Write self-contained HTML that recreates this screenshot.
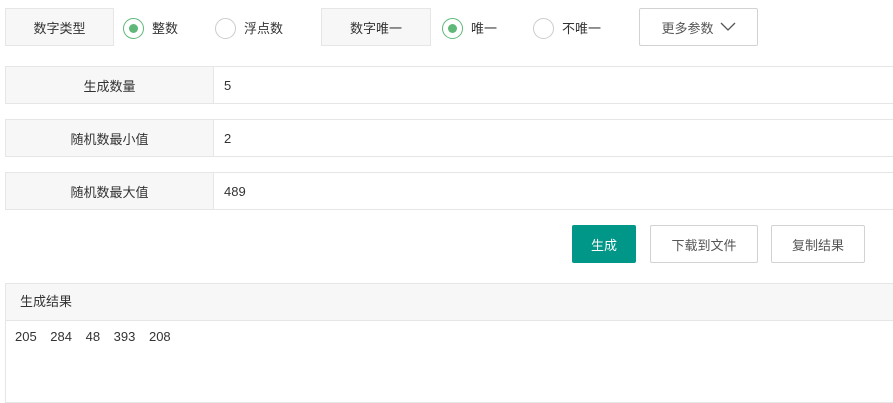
<!DOCTYPE html>
<html><head><meta charset="utf-8"><style>
*{box-sizing:border-box;margin:0;padding:0}
body{width:893px;height:401px;overflow:hidden;background:#fff;font-family:"Liberation Sans","Noto Sans CJK SC",sans-serif;font-size:13px;color:#333;position:relative}
.a{position:absolute}
.lbl{background:#f7f7f7;border:1px solid #e6e6e6;display:flex;align-items:center;justify-content:center}
.r{width:21px;height:21px;border-radius:50%;border:1.5px solid #ccc;background:#fff}
.r.on{border-color:#5fb878}
.r.on::after{content:"";position:absolute;left:4.5px;top:4.5px;width:9px;height:9px;border-radius:50%;background:#5fb878}
.t{line-height:16px}
.row{left:5px;right:-2px;height:38px;border:1px solid #e6e6e6;display:flex}
.row .l{width:208px;background:#f7f7f7;border-right:1px solid #e6e6e6;display:flex;align-items:center;justify-content:center}
.row .v{padding-left:10px;display:flex;align-items:center}
.btn{border:1px solid #d2d2d2;background:#fff;display:flex;align-items:center;justify-content:center;color:#555;border-radius:2px}
</style></head><body>
<div class="a lbl" style="left:5px;top:8px;width:109px;height:38px">数字类型</div>
<div class="a r on" style="left:123px;top:18px"></div>
<div class="a t" style="left:152px;top:21px">整数</div>
<div class="a r" style="left:215px;top:18px"></div>
<div class="a t" style="left:244px;top:21px">浮点数</div>
<div class="a lbl" style="left:321px;top:8px;width:110px;height:38px">数字唯一</div>
<div class="a r on" style="left:442px;top:18px"></div>
<div class="a t" style="left:471px;top:21px">唯一</div>
<div class="a r" style="left:533px;top:18px"></div>
<div class="a t" style="left:562px;top:21px">不唯一</div>
<div class="a btn" style="left:639px;top:8px;width:119px;height:38px">更多参数<svg width="16" height="10" style="margin-left:6px"><path d="M1 1L8 8L15 1" fill="none" stroke="#555" stroke-width="1.3"/></svg></div>
<div class="a row" style="top:66px"><div class="l">生成数量</div><div class="v">5</div></div>
<div class="a row" style="top:119px"><div class="l">随机数最小值</div><div class="v">2</div></div>
<div class="a row" style="top:172px"><div class="l">随机数最大值</div><div class="v">489</div></div>
<div class="a btn" style="left:572px;top:225px;width:64px;height:38px;background:#009688;border-color:#009688;color:#fff">生成</div>
<div class="a btn" style="left:650px;top:225px;width:108px;height:38px">下载到文件</div>
<div class="a btn" style="left:771px;top:225px;width:94px;height:38px">复制结果</div>
<div class="a" style="left:5px;right:-2px;top:283px;height:120px;border:1px solid #e6e6e6">
<div style="height:37px;background:#f7f7f7;border-bottom:1px solid #e6e6e6;padding-left:14px;line-height:36px">生成结果</div>
<div style="padding:8px 0 0 9px;word-spacing:10px">205 284 48 393 208</div>
</div>
</body></html>
